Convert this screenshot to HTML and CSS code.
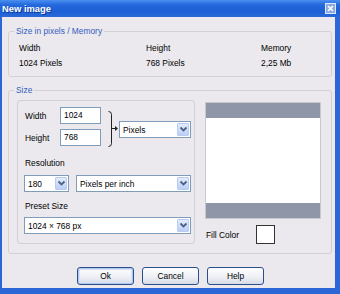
FILE: index.html
```html
<!DOCTYPE html>
<html>
<head>
    <title>New image</title>
    <link rel="stylesheet" href="styles.css">
</head>
<body>
    <div class="window">
        <div class="titlebar">
            <span class="title">New image</span>
            <span class="close">
                <svg width="9" height="9" viewBox="0 0 9 9"><path d="M2 2 L7 7 M7 2 L2 7" stroke="#fff" stroke-width="1.6"/></svg>
            </span>
        </div>

        <div class="client">
            <fieldset class="group">
                <legend>Size in pixels / Memory</legend>
                <div class="info-grid">
                    <span>Width</span>
                    <span>Height</span>
                    <span>Memory</span>
                    <span>1024 Pixels</span>
                    <span>768 Pixels</span>
                    <span>2,25 Mb</span>
                </div>
            </fieldset>

            <fieldset class="group size-group">
                <legend>Size</legend>
                <div class="size-body">
                    <div class="panel">
                        <div class="dims">
                            <div class="dim-fields">
                                <div class="dim-row">
                                    <span class="dim-label">Width</span>
                                    <span class="input">1024</span>
                                </div>
                                <div class="dim-row">
                                    <span class="dim-label">Height</span>
                                    <span class="input">768</span>
                                </div>
                            </div>
                            <svg class="bracket" width="11" height="36" viewBox="0 0 11 36">
                                <path d="M0.5 0.5 Q3.5 0.5 3.5 3.5 V32.5 Q3.5 35.5 0.5 35.5" fill="none" stroke="#222" stroke-width="1"/>
                                <path d="M3.5 17.5 H8" stroke="#222" stroke-width="1"/>
                                <path d="M7 15 L10 17.5 L7 20 Z" fill="#222"/>
                            </svg>
                            <div class="select unit-select">
                                <span class="select-text">Pixels</span>
                                <span class="drop"><svg width="9" height="7" viewBox="0 0 9 7"><path d="M1.5 1.5 L4.5 4.5 L7.5 1.5" fill="none" stroke="#4d6185" stroke-width="1.8"/></svg></span>
                            </div>
                        </div>

                        <div class="field-label res-label">Resolution</div>
                        <div class="res-row">
                            <div class="select dpi-select">
                                <span class="select-text">180</span>
                                <span class="drop"><svg width="9" height="7" viewBox="0 0 9 7"><path d="M1.5 1.5 L4.5 4.5 L7.5 1.5" fill="none" stroke="#4d6185" stroke-width="1.8"/></svg></span>
                            </div>
                            <div class="select res-unit-select">
                                <span class="select-text">Pixels per inch</span>
                                <span class="drop"><svg width="9" height="7" viewBox="0 0 9 7"><path d="M1.5 1.5 L4.5 4.5 L7.5 1.5" fill="none" stroke="#4d6185" stroke-width="1.8"/></svg></span>
                            </div>
                        </div>

                        <div class="field-label preset-label">Preset Size</div>
                        <div class="select preset-select">
                            <span class="select-text">1024 × 768 px</span>
                            <span class="drop"><svg width="9" height="7" viewBox="0 0 9 7"><path d="M1.5 1.5 L4.5 4.5 L7.5 1.5" fill="none" stroke="#4d6185" stroke-width="1.8"/></svg></span>
                        </div>
                    </div>

                    <div class="preview-col">
                        <div class="preview">
                            <div class="bar"></div>
                            <div class="bar"></div>
                        </div>
                        <div class="fill-row">
                            <span>Fill Color</span>
                            <span class="swatch"></span>
                        </div>
                    </div>
                </div>
            </fieldset>

            <div class="buttons">
                <button class="btn btn-default">Ok</button>
                <button class="btn">Cancel</button>
                <button class="btn">Help</button>
            </div>
        </div>
    </div>
</body>
</html>
```

FILE: styles.css
```css
body {
    margin: 0;
    font-family: 'Liberation Sans', Arial, sans-serif;
    font-size: 8.4px;
    color: #000;
}
.window {
    width: 340px;
    height: 294px;
    display: flex;
    flex-direction: column;
    background: #2d66d6;
}
.titlebar {
    height: 17px;
    display: flex;
    align-items: center;
    justify-content: space-between;
    padding: 0 4px 0 2px;
    background: linear-gradient(#4a8ff0, #2367dc 30%, #1d5fd6 70%, #2a6ad8);
}
.title {
    color: white;
    font-weight: bold;
    font-size: 9.4px;
    text-shadow: 1px 1px 0 #0b3a9a;
}
.close {
    width: 9px;
    height: 9px;
    display: flex;
    background: #8aa9e4;
    border: 1px solid #dfe8f8;
}
.client {
    flex: 1;
    margin: 0 5px 6px 2px;
    background: #ebe9ed;
    display: flex;
    flex-direction: column;
}
.group {
    margin: 0 3px 0 6px;
    padding: 0;
    border: 1px solid #d3d1d6;
    border-radius: 3px;
    min-width: 0;
}
.group legend {
    margin-left: 5px;
    padding: 0 2px;
    line-height: 10px;
    color: #3560c0;
}
.group:first-child {
    margin-top: 9px;
}
.info-grid {
    display: grid;
    grid-template-columns: 127px 115px 1fr;
    row-gap: 4px;
    line-height: 11px;
    padding: 7px 0 7px 10px;
}
.size-group {
    margin-top: 8px;
}
.size-body {
    display: flex;
    padding: 5px 10px 9px 8px;
}
.panel {
    width: 180px;
    box-sizing: border-box;
    border: 1px solid #d3d1d6;
    border-radius: 3px;
    padding: 6px 0 6px 6px;
}
.dims {
    display: flex;
    align-items: flex-start;
}
.dim-fields {
    display: flex;
    flex-direction: column;
    gap: 5px;
}
.dim-row {
    display: flex;
    align-items: center;
}
.dim-label {
    width: 35px;
    padding-left: 1px;
}
.input {
    width: 41px;
    height: 17px;
    box-sizing: border-box;
    border: 1px solid #7f9db9;
    background: #fff;
    padding-left: 3px;
    line-height: 15px;
}
.bracket {
    margin: 4px 0 0 7px;
}
.select {
    height: 17px;
    box-sizing: border-box;
    display: flex;
    align-items: center;
    border: 1px solid #7f9db9;
    background: #fff;
    padding-left: 3px;
}
.select-text {
    flex: 1;
    white-space: nowrap;
}
.drop {
    width: 12px;
    height: 13px;
    margin-right: 1px;
    box-sizing: border-box;
    display: flex;
    align-items: center;
    justify-content: center;
    border: 1px solid #b8cbf2;
    border-radius: 1px;
    background: linear-gradient(#e3ebfd, #bccff7);
}
.unit-select {
    width: 72px;
    margin: 14px 0 0 0;
}
.field-label {
    line-height: 11px;
    padding-left: 1px;
}
.res-label {
    margin-top: 11px;
}
.res-row {
    display: flex;
    gap: 7px;
    margin-top: 6px;
}
.dpi-select {
    width: 45px;
}
.res-unit-select {
    width: 115px;
}
.preset-label {
    margin-top: 9px;
}
.preset-select {
    width: 167px;
    margin-top: 5px;
}
.preview-col {
    margin-left: 10px;
    padding-top: 2px;
}
.preview {
    width: 116px;
    height: 117px;
    box-sizing: border-box;
    border: 1px solid #c9c8cd;
    background: #fff;
    display: flex;
    flex-direction: column;
    justify-content: space-between;
}
.bar {
    height: 15px;
    background: #8e96a8;
}
.fill-row {
    display: flex;
    align-items: center;
    margin-top: 6px;
    padding-left: 1px;
}
.fill-row span:first-child {
    width: 50px;
}
.swatch {
    width: 19px;
    height: 19px;
    box-sizing: border-box;
    border: 1px solid #333;
    background: #fff;
}
.buttons {
    display: flex;
    gap: 8px;
    margin-top: 13px;
    padding-left: 75px;
}
.btn {
    width: 57px;
    height: 18px;
    padding: 0;
    font: inherit;
    color: #000;
    border: 1px solid #2c4f8c;
    border-radius: 3px;
    background: linear-gradient(#fdfdfe, #eef0f5 55%, #d5dbe6);
}
.btn-default {
    box-shadow: inset 0 0 0 1px #b4c8ee, inset 0 0 0 2px #d6e2f8;
}
```
